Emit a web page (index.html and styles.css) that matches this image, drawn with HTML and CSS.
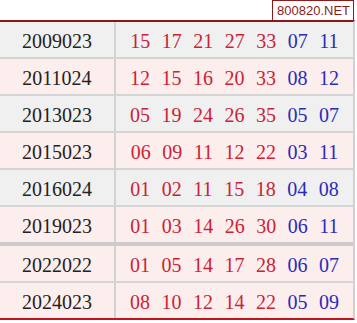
FILE: index.html
```html
<!DOCTYPE html>
<html>
<head>
<meta charset="utf-8">
<link rel="stylesheet" href="styles.css">
</head>
<body>
<div class="wrap">
  <div class="label">800820.NET</div>
  <div class="table">
    <div class="row gray"><div class="year">2009023</div><div class="nums"><span class="r">15</span><span class="r">17</span><span class="r">21</span><span class="r">27</span><span class="r">33</span><span class="b">07</span><span class="b">11</span></div></div>
    <div class="row pink"><div class="year">2011024</div><div class="nums"><span class="r">12</span><span class="r">15</span><span class="r">16</span><span class="r">20</span><span class="r">33</span><span class="b">08</span><span class="b">12</span></div></div>
    <div class="row gray"><div class="year">2013023</div><div class="nums"><span class="r">05</span><span class="r">19</span><span class="r">24</span><span class="r">26</span><span class="r">35</span><span class="b">05</span><span class="b">07</span></div></div>
    <div class="row pink"><div class="year">2015023</div><div class="nums"><span class="r">06</span><span class="r">09</span><span class="r">11</span><span class="r">12</span><span class="r">22</span><span class="b">03</span><span class="b">11</span></div></div>
    <div class="row gray"><div class="year">2016024</div><div class="nums"><span class="r">01</span><span class="r">02</span><span class="r">11</span><span class="r">15</span><span class="r">18</span><span class="b">04</span><span class="b">08</span></div></div>
    <div class="row pink sep"><div class="year">2019023</div><div class="nums"><span class="r">01</span><span class="r">03</span><span class="r">14</span><span class="r">26</span><span class="r">30</span><span class="b">06</span><span class="b">11</span></div></div>
    <div class="row pink"><div class="year">2022022</div><div class="nums"><span class="r">01</span><span class="r">05</span><span class="r">14</span><span class="r">17</span><span class="r">28</span><span class="b">06</span><span class="b">07</span></div></div>
    <div class="row pink last"><div class="year">2024023</div><div class="nums"><span class="r">08</span><span class="r">10</span><span class="r">12</span><span class="r">14</span><span class="r">22</span><span class="b">05</span><span class="b">09</span></div></div>
  </div>
</div>
</body>
</html>
```

FILE: styles.css
```css
html, body {
  margin: 0;
  padding: 0;
  background: #ffffff;
}
.wrap {
  position: relative;
  padding-top: 20px;
  width: 355px;
}
.label {
  position: absolute;
  top: 0;
  right: 1px;
  height: 19px;
  padding: 0 3px 0 4px;
  border: 1px solid #8e1b1b;
  border-bottom: none;
  background: #fff;
  color: #8e1b1b;
  font-family: "Liberation Sans", Arial, sans-serif;
  font-size: 13px;
  line-height: 20px;
}
.table {
  border-top: 2px solid #8e1515;
  border-bottom: 2px solid #c4141e;
  border-right: 2px solid #d2d2d2;
  font-family: "Liberation Serif", "Times New Roman", serif;
  font-size: 20px;
}
.row {
  display: flex;
  height: 35px;
  border-bottom: 2px solid #d4d4d4;
}
.row.sep {
  border-bottom-width: 4px;
  border-bottom-color: #cccccc;
}
.row.last {
  border-bottom: none;
}
.gray {
  background: #f0f0f0;
}
.pink {
  background: #fdeeee;
}
.year {
  width: 116px;
  border-right: 2px solid #d2d2d2;
  display: flex;
  align-items: center;
  justify-content: center;
  color: #222222;
  padding-top: 4px;
  box-sizing: border-box;
}
.nums {
  flex: 1;
  display: flex;
  align-items: center;
  justify-content: center;
  gap: 11.5px;
  padding-top: 4px;
  box-sizing: border-box;
}
.r {
  color: #cc2236;
}
.b {
  color: #2b2bb8;
}
```
